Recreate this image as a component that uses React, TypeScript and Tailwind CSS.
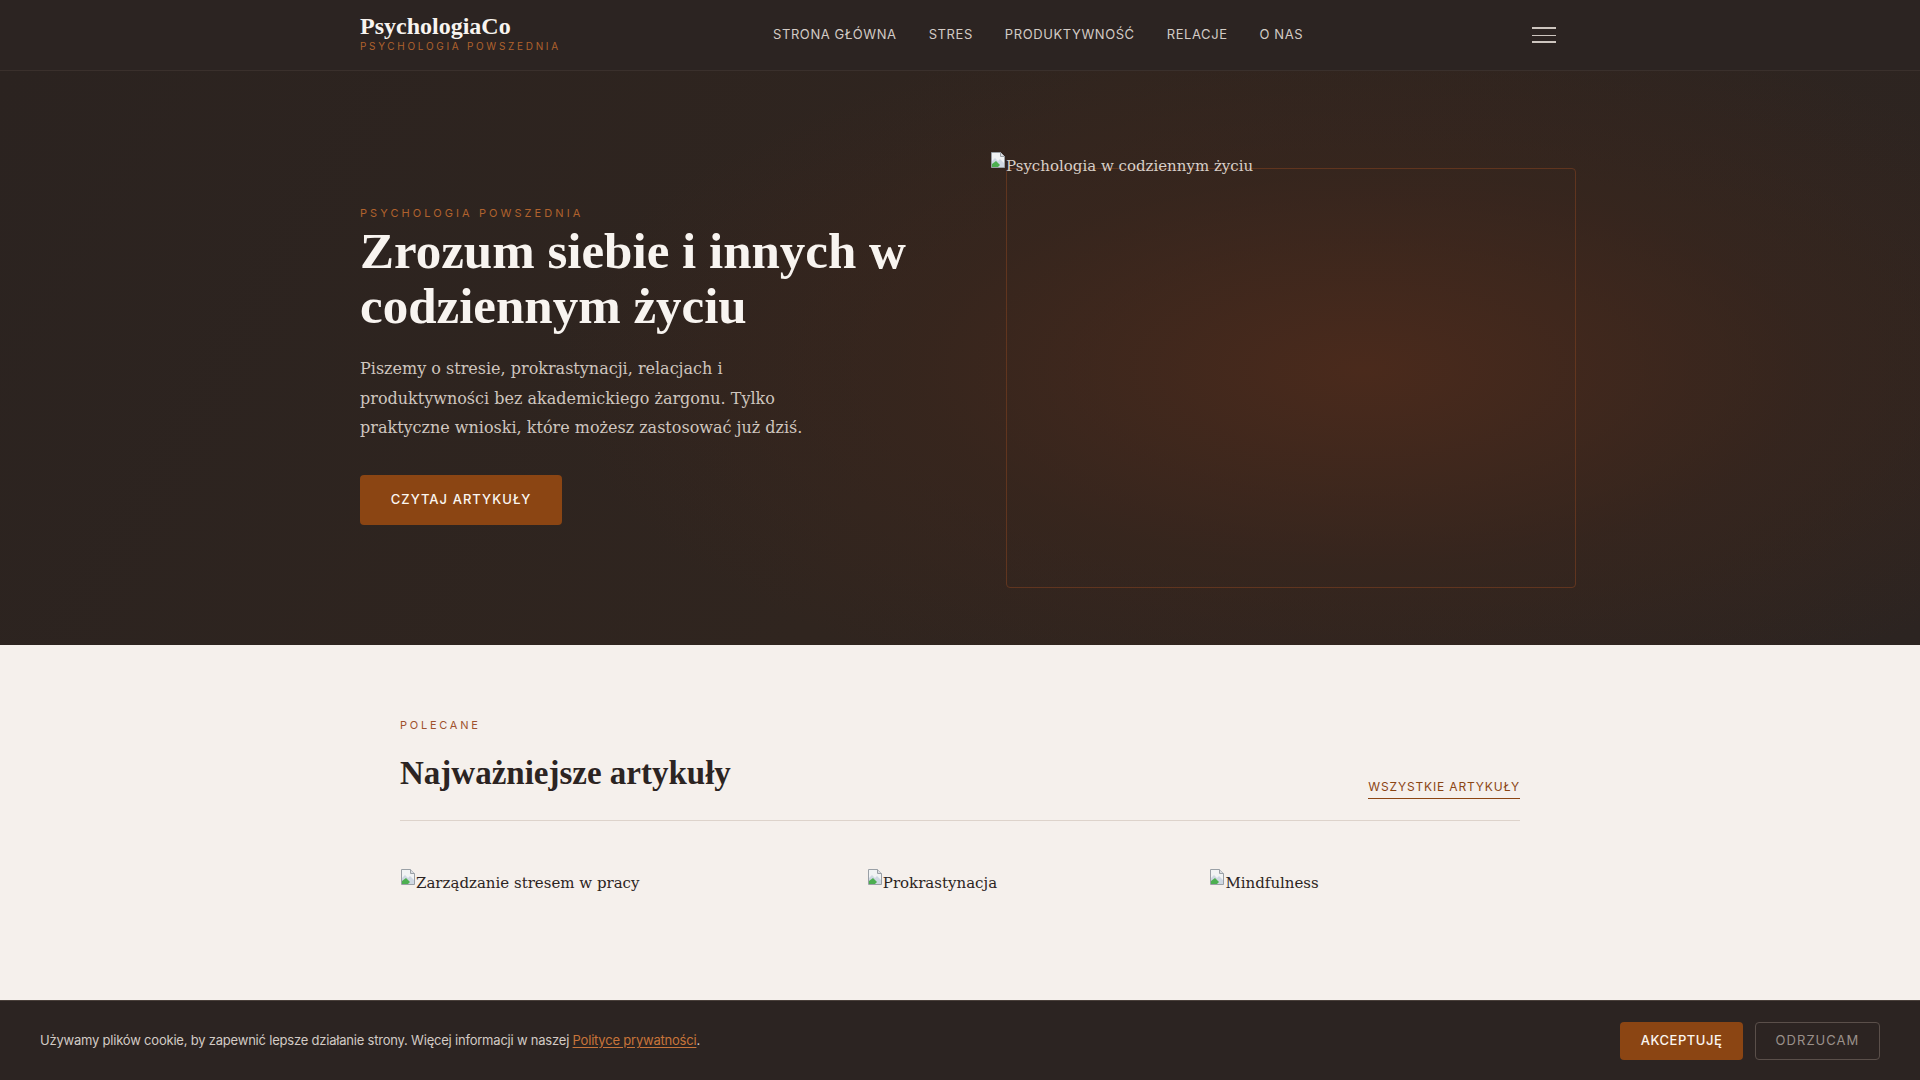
import React from "react";

const navItems = ["Strona główna", "Stres", "Produktywność", "Relacje", "O nas"];

const cards = [
  { alt: "Zarządzanie stresem w pracy" },
  { alt: "Prokrastynacja" },
  { alt: "Mindfulness" },
];

const serif = "font-['Liberation_Serif','Times_New_Roman',serif]";
const bodySerif = "font-['DejaVu_Serif',serif]";
const sans = "font-['Inter','Liberation_Sans',sans-serif]";

function BrokenImage({ alt, className }: { alt: string; className?: string }) {
  return (
    <div className={"flex items-start " + (className ?? "")}>
      <svg width="16" height="16" viewBox="0 0 16 16" className="shrink-0">
        <path d="M1.5 0.5h9l4 4v11h-13z" fill="#f1f3f4" stroke="#9aa0a6" />
        <path d="M10.5 0.5v4h4" fill="#dadce0" stroke="#9aa0a6" />
        <path d="M2 9l3-3 3 3 2-2 4 4v4H2z" fill="#cfd8e3" />
        <path d="M2 15v-3l4-3 4 4-2 2z" fill="#4caf50" />
      </svg>
      <span className={bodySerif + " text-[15px] leading-[27px] mt-[1px]"}>{alt}</span>
    </div>
  );
}

export default function App() {
  return (
    <div className={sans + " min-h-screen bg-[#f5f0ec]"}>
      {/* Header */}
      <header className="bg-[#2c2422] border-b border-[#3a302c]">
        <div className="max-w-[1200px] mx-auto h-[70px] flex items-center">
          <div className="flex flex-col w-[200px] mb-[4px] whitespace-nowrap">
            <span className={serif + " text-[24px] leading-[26px] font-bold text-[#f8f4f0]"}>PsychologiaCo</span>
            <span className="text-[10px] leading-[13px] tracking-[0.27em] text-[#b0622d] mt-[1px]">
              PSYCHOLOGIA POWSZEDNIA
            </span>
          </div>
          <nav className="flex gap-8 ml-[213px]">
            {navItems.map((item) => (
              <a key={item} href="#" className="text-[13px] uppercase tracking-[0.045em] text-[#d3cbc5]">
                {item}
              </a>
            ))}
          </nav>
          <button className="ml-auto mr-1 flex flex-col gap-[5.5px] w-6">
            <span className="h-[2px] bg-[#cdc5bf]" />
            <span className="h-[1px] bg-[#cdc5bf]" />
            <span className="h-[2px] bg-[#cdc5bf]" />
          </button>
        </div>
      </header>

      {/* Hero */}
      <section className="bg-[radial-gradient(ellipse_42%_62%_at_71%_52%,#4a2a1c_0%,rgba(60,38,28,0.55)_55%,rgba(44,36,33,0)_100%),linear-gradient(120deg,#2b2320_0%,#30251f_50%,#2c2421_100%)] pt-[81px] pb-[73px]">
        <div className="max-w-[1200px] mx-auto grid grid-cols-2 gap-[60px] items-start">
          <div className="flex flex-col mt-[53px]">
            <span className="text-[11px] leading-[16px] tracking-[0.28em] text-[#b0622d]">PSYCHOLOGIA POWSZEDNIA</span>
            <h1 className={serif + " mt-[3px] text-[51px] leading-[55px] font-bold text-[#f8f4f0]"}>
              Zrozum siebie i innych w codziennym życiu
            </h1>
            <p className={bodySerif + " mt-[20px] max-w-[460px] text-[16px] leading-[29.6px] text-[#cfc6bf]"}>
              Piszemy o stresie, prokrastynacji, relacjach i produktywności bez akademickiego żargonu. Tylko
              praktyczne wnioski, które możesz zastosować już dziś.
            </p>
            <div className="mt-8">
              <a
                href="#"
                className="inline-flex items-center justify-center h-[50px] w-[202px] rounded bg-[#8b4513] text-[13px] font-medium tracking-[0.08em] text-[#fbf6f1]"
              >
                CZYTAJ ARTYKUŁY
              </a>
            </div>
          </div>
          <div className="relative h-[420px]">
            <div className="absolute top-4 left-4 -right-4 -bottom-4 rounded border border-[#6b3a1f]/80" />
            <BrokenImage alt="Psychologia w codziennym życiu" className="relative text-[#d8cfc8]" />
          </div>
        </div>
      </section>

      {/* Featured */}
      <section className="pt-[72px] pb-24">
        <div className="max-w-[1120px] mx-auto">
          <p className="text-[11px] leading-[16px] tracking-[0.25em] text-[#a0522d]">POLECANE</p>
          <div className="flex items-end justify-between pb-[27px] border-b border-[#ddd3cb]">
            <h2 className={serif + " mt-[20px] text-[33px] leading-[40px] font-bold text-[#2c2422]"}>
              Najważniejsze artykuły
            </h2>
            <a
              href="#"
              className="mb-[-6px] pb-[3px] border-b-[1.5px] border-[#8b4513] text-[12px] leading-[16px] tracking-[0.07em] text-[#8b4513]"
            >
              WSZYSTKIE ARTYKUŁY
            </a>
          </div>
          <div className="mt-12 grid grid-cols-[1.4fr_1fr_1fr] gap-8">
            {cards.map((c) => (
              <div key={c.alt} className="h-[260px]">
                <BrokenImage alt={c.alt} className="text-[#2c2422]" />
              </div>
            ))}
          </div>
        </div>
      </section>

      {/* Cookie bar */}
      <div className="fixed bottom-0 left-0 right-0 h-[80px] bg-[#2c2422] border-t border-[#4a403b] px-10 flex items-center justify-between">
        <p className="text-[13px] tracking-[-0.016em] text-[#d3cbc5]">
          Używamy plików cookie, by zapewnić lepsze działanie strony. Więcej informacji w naszej{" "}
          <a href="#" className="text-[#c8743a] underline underline-offset-2">
            Polityce prywatności
          </a>
          .
        </p>
        <div className="flex gap-3">
          <button className="h-[38px] w-[123px] rounded bg-[#8b4513] text-[13px] font-medium tracking-[0.04em] text-[#fbf6f1]">
            AKCEPTUJĘ
          </button>
          <button className="h-[38px] w-[125px] rounded border border-[#5a4f4a] text-[13px] tracking-[0.08em] text-[#9a908a]">
            ODRZUCAM
          </button>
        </div>
      </div>
    </div>
  );
}
